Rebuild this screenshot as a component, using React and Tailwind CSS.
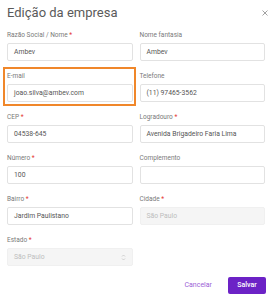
import React from "react";

const Field = ({ label, required, value, disabled, select, highlight }) => {
  return (
    <div className="relative flex flex-col">
      {highlight && (
        <div className="absolute -left-[4px] -right-[3px] -top-[4px] -bottom-[4px] border-2 border-[#f0872a] pointer-events-none"></div>
      )}
      <label className="h-[10px] leading-[10px] text-[6.5px] text-[#7a7a7a]">
        {label}
        {required && <span className="text-[#e53935]"> *</span>}
      </label>
      <div
        className={
          "mt-[3px] h-[18px] rounded-[2px] flex items-center justify-between px-[6px] text-[6.8px] " +
          (disabled
            ? "bg-[#f5f5f5] border border-[#f0f0f0] text-[#bdbdbd]"
            : "bg-white border border-[#e2e2e2] text-[#555555]")
        }
      >
        <span>{value}</span>
        {select && (
          <svg width="5" height="7" viewBox="0 0 5 7" fill="none" stroke="#c4c4c4" strokeWidth="0.8">
            <path d="M1 2.5 L2.5 1 L4 2.5" />
            <path d="M1 4.5 L2.5 6 L4 4.5" />
          </svg>
        )}
      </div>
    </div>
  );
};

const App = () => {
  return (
    <div className="w-[274px] h-[300px] bg-white font-['Roboto',sans-serif] pl-[7px] pr-[9px] pt-[5px]">
      <div className="flex items-center justify-between h-[16px]">
        <h1 className="text-[13px] leading-[16px] text-[#5a5a5a]">Edição da empresa</h1>
        <svg width="6" height="6" viewBox="0 0 6 6" stroke="#8a8a8a" strokeWidth="0.8" className="-mr-[3px]">
          <path d="M0.5 0.5 L5.5 5.5 M5.5 0.5 L0.5 5.5" />
        </svg>
      </div>

      <div className="grid grid-cols-2 gap-x-[7px] gap-y-[10px] mt-[9px]">
        <Field label="Razão Social / Nome" required value="Ambev" />
        <Field label="Nome fantasia" value="Ambev" />
        <Field label="E-mail" value="joao.silva@ambev.com" highlight />
        <Field label="Telefone" value="(11) 97465-3562" />
        <Field label="CEP" required value="04538-645" />
        <Field label="Logradouro" required value="Avenida Brigadeiro Faria Lima" />
        <Field label="Número" required value="100" />
        <Field label="Complemento" value="" />
        <Field label="Bairro" required value="Jardim Paulistano" />
        <Field label="Cidade" required value="São Paulo" disabled />
        <Field label="Estado" required value="São Paulo" disabled select />
      </div>

      <div className="flex items-center justify-end gap-[16px] mt-[11px] -mr-[1px]">
        <button className="text-[7px] text-[#9b5fd6]">Cancelar</button>
        <button className="h-[17px] w-[38px] rounded-[2px] bg-[#6c22c6] text-white text-[7px] font-medium">
          Salvar
        </button>
      </div>
    </div>
  );
};

export default App;
